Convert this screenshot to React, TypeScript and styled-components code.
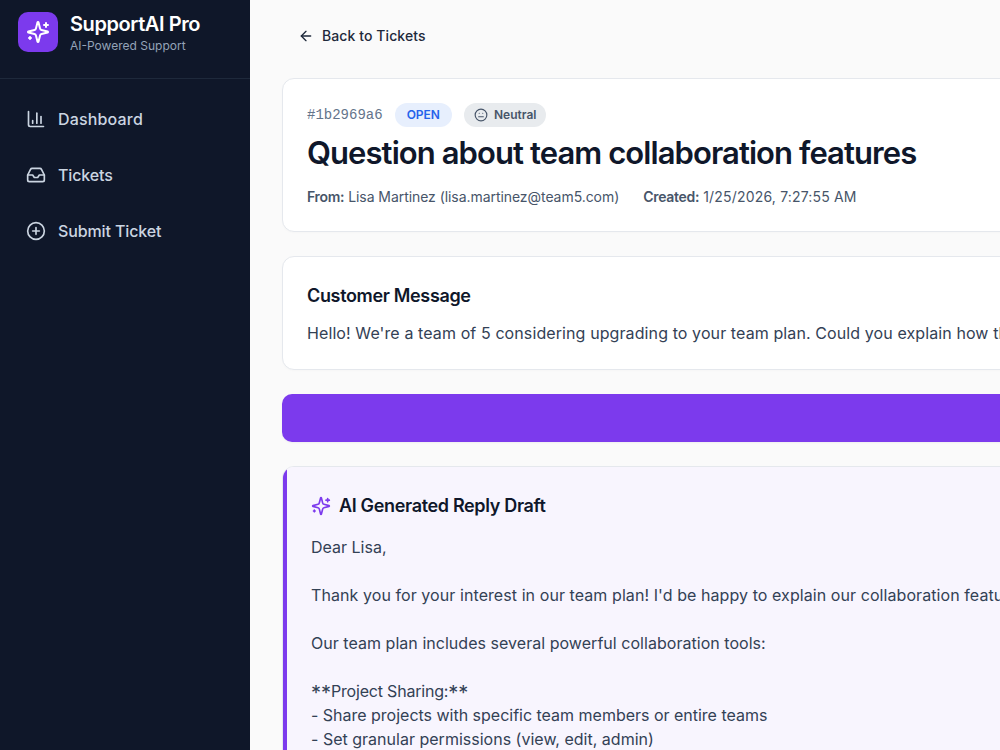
import React from "react";
import styled, { createGlobalStyle } from "styled-components";
import { ArrowLeft, ChartColumn, CirclePlus, Inbox, Meh } from "lucide-react";

const GlobalStyle = createGlobalStyle`
  *, *::before, *::after { box-sizing: border-box; }
  body {
    margin: 0;
    overflow: hidden;
    background: #fafafa;
    color: #0f172a;
    font-family: Inter, "Liberation Sans", sans-serif;
    font-size: 16px;
    line-height: 24px;
  }
  h1, h2, p { margin: 0; }
`;

const Layout = styled.div`
  display: flex;
  width: 1000px;
  height: 750px;
  overflow: hidden;
`;

const Sidebar = styled.aside`
  flex: 0 0 250px;
  background: #0f1729;
`;

const Brand = styled.div`
  display: flex;
  align-items: flex-start;
  gap: 12px;
  height: 79px;
  padding: 12px 18px 0;
  border-bottom: 1px solid #1e293b;
`;

const Logo = styled.div`
  display: grid;
  place-items: center;
  width: 40px;
  height: 40px;
  border-radius: 10px;
  background: #7c3aed;
  color: #fff;
`;

const BrandName = styled.div`
  color: #fff;
  font-size: 20px;
  font-weight: 600;
  line-height: 25px;
  letter-spacing: -0.42px;
  white-space: nowrap;
`;

const BrandTag = styled.div`
  color: #94a3b8;
  font-size: 12px;
  line-height: 18px;
`;

const Nav = styled.nav`
  display: flex;
  flex-direction: column;
  gap: 8px;
  padding: 16px 10px;
`;

const NavItem = styled.a<{ $track: number }>`
  display: flex;
  align-items: center;
  gap: 12px;
  height: 48px;
  padding: 0 16px;
  color: #cbd5e1;
  font-weight: 500;
  letter-spacing: ${(p) => p.$track}px;
`;

const Main = styled.main`
  display: flex;
  flex: 0 0 1250px;
  flex-direction: column;
  gap: 24px;
  padding: 18px 32px 0;
`;

const BackButton = styled.button`
  display: flex;
  flex-shrink: 0;
  align-items: center;
  align-self: flex-start;
  gap: 8px;
  height: 36px;
  padding: 0 16px;
  border: 0;
  background: transparent;
  color: #1e293b;
  font: 500 14px/20px Inter, sans-serif;
  letter-spacing: 0.09px;
`;

const Card = styled.section<{ $height: number }>`
  flex: 0 0 ${(p) => p.$height}px;
  padding: 24px;
  border: 1px solid #e5e8ed;
  border-radius: 12px;
  background: #fff;
  box-shadow: 0 1px 2px rgba(15, 23, 42, 0.02);
`;

const Badges = styled.div`
  display: flex;
  align-items: center;
  gap: 12px;
  height: 24px;
`;

const TicketId = styled.span`
  color: #64748b;
  font: 14px/21px "Liberation Mono", monospace;
`;

const Badge = styled.span<{ $tone: "open" | "neutral" }>`
  display: flex;
  align-items: center;
  gap: 6px;
  height: 24px;
  padding: 0 ${(p) => (p.$tone === "open" ? 12 : 10)}px;
  border-radius: 12px;
  background: ${(p) => (p.$tone === "open" ? "#e7effd" : "#e8ebee")};
  color: ${(p) => (p.$tone === "open" ? "#2563eb" : "#475569")};
  font-size: 12px;
  font-weight: 600;
`;

const Title = styled.h1`
  margin-top: 7px;
  font-size: 31px;
  font-weight: 600;
  line-height: 38px;
  letter-spacing: -0.92px;
  white-space: nowrap;
`;

const Meta = styled.div`
  display: flex;
  gap: 24px;
  margin-top: 14px;
  color: #475569;
  font-size: 14px;
  line-height: 21px;
  strong { font-weight: 600; letter-spacing: -0.3px; }
`;

const MetaItem = styled.span<{ $track: number }>`
  letter-spacing: ${(p) => p.$track}px;
  white-space: nowrap;
`;

const Heading = styled.h2`
  display: flex;
  align-items: center;
  gap: 8px;
  height: 28px;
  font-size: 18px;
  font-weight: 600;
  letter-spacing: -0.34px;
  white-space: nowrap;
  svg { color: #7c3aed; }
`;

const MessageCard = styled(Card)`
  padding-top: 25px;
`;

const Message = styled.p`
  margin-top: 11px;
  color: #334155;
  letter-spacing: 0.1px;
  white-space: nowrap;
`;

const GenerateBar = styled.div`
  flex: 0 0 48px;
  border-radius: 10px;
  background: #7c3aed;
  box-shadow: 0 1px 2px rgba(15, 23, 42, 0.05);
`;

const DraftCard = styled(Card)`
  padding: 0;
  overflow: hidden;
`;

const DraftBody = styled.div`
  height: 100%;
  padding: 25px 24px;
  border-left: 4px solid #7c3aed;
  background: #f8f5fe;
`;

const DraftText = styled.div`
  margin-top: 15px;
  color: #334155;
`;

const DraftLine = styled.p<{ $track: number }>`
  min-height: 24px;
  letter-spacing: ${(p) => p.$track}px;
  white-space: nowrap;
`;

const Marks = styled.span`
  font-size: 20px;
  line-height: 0;
  letter-spacing: 0;
  vertical-align: -3px;
`;

const draft: { text: string; track: number; marked?: boolean }[] = [
  { text: "Dear Lisa,", track: 0 },
  { text: "", track: 0 },
  { text: "Thank you for your interest in our team plan! I'd be happy to explain our collaboration features in detail.", track: 0.075 },
  { text: "", track: 0 },
  { text: "Our team plan includes several powerful collaboration tools:", track: 0.035 },
  { text: "", track: 0 },
  { text: "Project Sharing:", track: -0.2, marked: true },
  { text: "- Share projects with specific team members or entire teams", track: -0.01 },
  { text: "- Set granular permissions (view, edit, admin)", track: 0.01 },
];

const Sparkle = ({ size }: { size: number }) => (
  <svg width={size} height={size} viewBox="0 0 24 24" fill="none" stroke="currentColor" strokeWidth="2" strokeLinecap="round" strokeLinejoin="round">
    <path d="M9.937 15.5A2 2 0 0 0 8.5 14.063l-6.135-1.582a.5.5 0 0 1 0-.962L8.5 9.936A2 2 0 0 0 9.937 8.5l1.582-6.135a.5.5 0 0 1 .963 0L14.063 8.5A2 2 0 0 0 15.5 9.937l6.135 1.581a.5.5 0 0 1 0 .964L15.5 14.063a2 2 0 0 0-1.437 1.437l-1.582 6.135a.5.5 0 0 1-.963 0z" />
    <path d="M20 3v4M22 5h-4M4 17v2M5 18H3" />
  </svg>
);

export default function App() {
  return (
    <>
      <GlobalStyle />
      <Layout>
        <Sidebar>
          <Brand>
            <Logo><Sparkle size={24} /></Logo>
            <div>
              <BrandName>SupportAI Pro</BrandName>
              <BrandTag>AI-Powered Support</BrandTag>
            </div>
          </Brand>
          <Nav>
            <NavItem $track={0.17}><ChartColumn size={20} />Dashboard</NavItem>
            <NavItem $track={-0.12}><Inbox size={20} />Tickets</NavItem>
            <NavItem $track={-0.12}><CirclePlus size={20} />Submit Ticket</NavItem>
          </Nav>
        </Sidebar>
        <Main>
          <BackButton><ArrowLeft size={16} />Back to Tickets</BackButton>
          <Card $height={154}>
            <Badges>
              <TicketId>#1b2969a6</TicketId>
              <Badge $tone="open">OPEN</Badge>
              <Badge $tone="neutral"><Meh size={14} />Neutral</Badge>
            </Badges>
            <Title>Question about team collaboration features</Title>
            <Meta>
              <MetaItem $track={-0.06}><strong>From:</strong> Lisa Martinez (lisa.martinez@team5.com)</MetaItem>
              <MetaItem $track={0.18}><strong>Created:</strong> 1/25/2026, 7:27:55 AM</MetaItem>
            </Meta>
          </Card>
          <MessageCard $height={114}>
            <Heading>Customer Message</Heading>
            <Message>Hello! We're a team of 5 considering upgrading to your team plan. Could you explain how the collaboration features work?</Message>
          </MessageCard>
          <GenerateBar />
          <DraftCard $height={500}>
            <DraftBody>
              <Heading><Sparkle size={20} />AI Generated Reply Draft</Heading>
              <DraftText>
                {draft.map((line, i) => (
                  <DraftLine key={i} $track={line.track}>
                    {line.marked && <Marks>**</Marks>}
                    {line.text}
                    {line.marked && <Marks>**</Marks>}
                  </DraftLine>
                ))}
              </DraftText>
            </DraftBody>
          </DraftCard>
        </Main>
      </Layout>
    </>
  );
}
